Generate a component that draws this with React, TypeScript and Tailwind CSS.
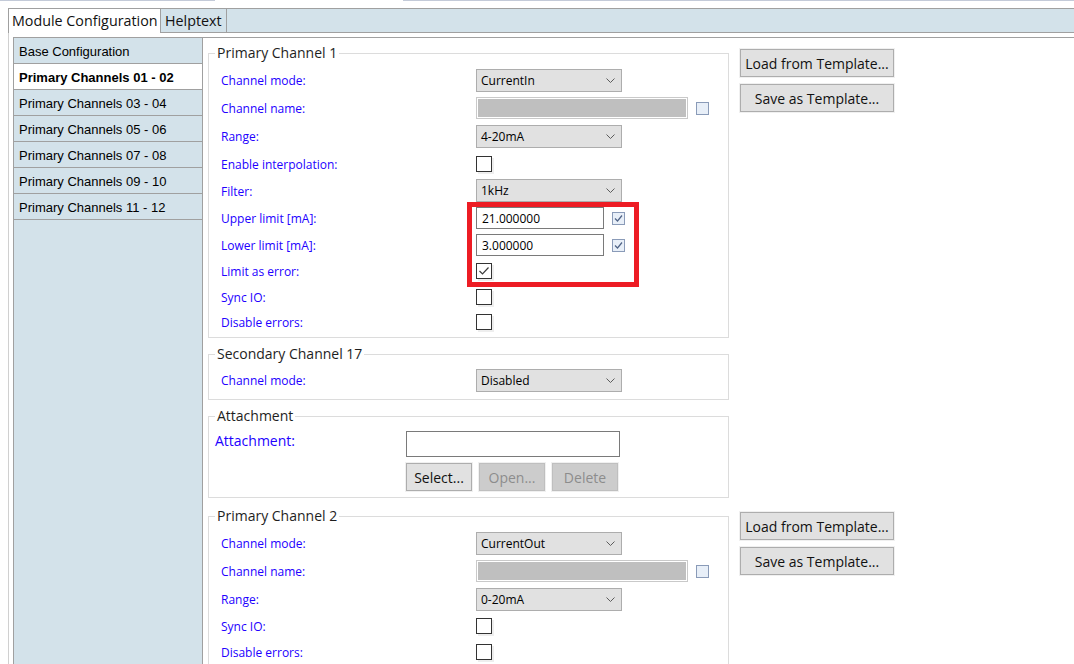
import React from "react";

function Chevron() {
  return (
    <svg width="9" height="5" viewBox="0 0 9 5" className="shrink-0">
      <path d="M0.5 0.5 L4.5 4.5 L8.5 0.5" fill="none" stroke="#5c5c5c" strokeWidth="1" />
    </svg>
  );
}

function Combo({ value }: { value: string }) {
  return (
    <div className="flex h-[23px] w-[146px] items-center justify-between border border-[#adadad] bg-[#e1e1e1] pl-[4px] pr-[6px] text-[12px] text-black">
      <span className="pt-px">{value}</span>
      <Chevron />
    </div>
  );
}

function SmallCheck({ checked }: { checked?: boolean }) {
  return (
    <div className="flex h-[13px] w-[13px] items-center justify-center border border-[#8a9bb8] bg-[#e8eff8]">
      {checked && (
        <svg width="11" height="11" viewBox="0 0 11 11">
          <path d="M2 5.5 L4.5 8 L9 2.5" fill="none" stroke="#4f6386" strokeWidth="1.2" />
        </svg>
      )}
    </div>
  );
}

function BigCheck({ checked }: { checked?: boolean }) {
  return (
    <div className="flex h-[16px] w-[16px] items-center justify-center border border-[#333333] bg-white shadow-[2px_2px_0_#eeeeee]">
      {checked && (
        <svg width="14" height="14" viewBox="0 0 14 14">
          <path d="M2.5 7 L5.5 10 L11.5 3.5" fill="none" stroke="#3c3c3c" strokeWidth="1.2" />
        </svg>
      )}
    </div>
  );
}

function NameBox() {
  return (
    <div className="flex items-center gap-[8px]">
      <div className="h-[22px] w-[212px] border border-[#c9c9c9] bg-white p-px">
        <div className="h-full w-full bg-[#bfbfbf]" />
      </div>
      <SmallCheck />
    </div>
  );
}

function LimitBox({ value }: { value: string }) {
  return (
    <div className="flex items-center gap-[8px]">
      <div className="flex h-[22px] w-[128px] items-center border border-[#7a7a7a] bg-white pl-[5px] pt-px text-[12px] text-black">
        {value}
      </div>
      <SmallCheck checked />
    </div>
  );
}

function Row({ h, label, children }: { h: string; label: string; children: React.ReactNode }) {
  return (
    <div className={`flex items-center ${h}`}>
      <div className="w-[255px] shrink-0 pt-[2px] text-[12px] text-[#2200ff]">{label}</div>
      {children}
    </div>
  );
}

function Button({ label, w, disabled }: { label: string; w: string; disabled?: boolean }) {
  return (
    <div
      className={`flex h-[28px] ${w} items-center justify-center border text-[14px] shadow-[0_0_0_1px_#f0f0f0] ${
        disabled
          ? "border-[#bfbfbf] bg-[#cccccc] text-[#8c8c8c]"
          : "border-[#adadad] bg-[#e1e1e1] text-[#111111]"
      }`}
    >
      {label}
    </div>
  );
}

function TemplateButtons() {
  return (
    <div className="ml-[11px] mt-[5px] flex flex-col gap-[7px]">
      <Button label="Load from Template..." w="w-[154px]" />
      <Button label="Save as Template..." w="w-[154px]" />
    </div>
  );
}

function Group({ title, children }: { title: string; children: React.ReactNode }) {
  return (
    <fieldset className="w-[521px] border border-[#dcdcdc]">
      <legend className="ml-[6px] px-[2px] text-[14px] leading-[18px] text-[#1e1e1e]">{title}</legend>
      {children}
    </fieldset>
  );
}

const sideItems = [
  "Base Configuration",
  "Primary Channels 01 - 02",
  "Primary Channels 03 - 04",
  "Primary Channels 05 - 06",
  "Primary Channels 07 - 08",
  "Primary Channels 09 - 10",
  "Primary Channels 11 - 12",
];

export default function App() {
  return (
    <div className="relative h-[664px] w-[1074px] overflow-hidden bg-white font-['Open_Sans',sans-serif]">
      <div className="flex h-px">
        <div className="w-[215px] bg-[#c3cad8]" />
        <div className="w-[188px]" />
        <div className="flex-1 bg-[#c3cad8]" />
      </div>
      <div className="h-[7px]" />

      <div className="ml-[8px] flex h-[656px] flex-col">
        {/* tab strip */}
        <div className="flex h-[25px] border-t border-[#a0a0a0] bg-[#d3e2ea]">
          <div className="flex h-[24px] w-[153px] items-center border-l border-r border-[#a0a0a0] bg-white pl-[3px] text-[14.3px] text-[#111111]">
            Module Configuration
          </div>
          <div className="flex h-[24px] w-[66px] items-center border-b border-r border-[#a0a0a0] pl-[4px] text-[14.3px] text-[#111111]">
            Helptext
          </div>
          <div className="h-[24px] flex-1 border-b border-[#a0a0a0]" />
        </div>

        {/* tab page */}
        <div className="flex flex-1 flex-col border-l border-[#d0d0d0] pl-[4px] pt-[4px]">
          <div className="flex flex-1 border-l border-t border-[#a0a0a0]">
            {/* sidebar */}
            <div className="w-[189px] shrink-0 border-r border-[#a0a0a0] bg-[#d3e2ea] font-['Liberation_Sans',Arial,sans-serif] text-[13px] text-black">
              {sideItems.map((item, i) => (
                <div
                  key={item}
                  className={`flex h-[26px] items-center border-b border-[#a0a0a0] pl-[5px] pt-[2px] ${
                    i === 1 ? "bg-white font-bold" : ""
                  }`}
                >
                  {item}
                </div>
              ))}
            </div>

            {/* content */}
            <div className="flex flex-1 flex-col pl-[5px] pt-[6px]">
              <div className="flex items-start">
                <Group title="Primary Channel 1">
                  <div className="pb-[3px] pl-[12px] pt-[4px]">
                    <Row h="h-[28px]" label="Channel mode:">
                      <Combo value="CurrentIn" />
                    </Row>
                    <Row h="h-[28px]" label="Channel name:">
                      <NameBox />
                    </Row>
                    <Row h="h-[28px]" label="Range:">
                      <Combo value="4-20mA" />
                    </Row>
                    <Row h="h-[27px]" label="Enable interpolation:">
                      <BigCheck />
                    </Row>
                    <Row h="h-[27px]" label="Filter:">
                      <Combo value="1kHz" />
                    </Row>
                    <Row h="h-[28px]" label="Upper limit [mA]:">
                      <LimitBox value="21.000000" />
                    </Row>
                    <Row h="h-[26px]" label="Lower limit [mA]:">
                      <LimitBox value="3.000000" />
                    </Row>
                    <Row h="h-[26px]" label="Limit as error:">
                      <BigCheck checked />
                    </Row>
                    <Row h="h-[25px]" label="Sync IO:">
                      <BigCheck />
                    </Row>
                    <Row h="h-[25px]" label="Disable errors:">
                      <BigCheck />
                    </Row>
                  </div>
                </Group>
                <TemplateButtons />
              </div>

              <div className="mt-[7px]">
                <Group title="Secondary Channel 17">
                  <div className="pb-[5px] pl-[12px] pt-[3px]">
                    <Row h="h-[28px]" label="Channel mode:">
                      <Combo value="Disabled" />
                    </Row>
                  </div>
                </Group>
              </div>

              <div className="mt-[7px]">
                <Group title="Attachment">
                  <div className="pb-[6px] pl-[6px] pt-[6px]">
                    <div className="flex h-[26px] items-start">
                      <div className="w-[191px] shrink-0 text-[14px] leading-[20px] text-[#2200ff]">Attachment:</div>
                      <div className="h-[26px] w-[214px] border border-[#7a7a7a] bg-white" />
                    </div>
                    <div className="ml-[191px] mt-[6px] flex gap-[7px]">
                      <Button label="Select..." w="w-[66px]" />
                      <Button label="Open..." w="w-[66px]" disabled />
                      <Button label="Delete" w="w-[66px]" disabled />
                    </div>
                  </div>
                </Group>
              </div>

              <div className="mt-[9px] flex items-start">
                <Group title="Primary Channel 2">
                  <div className="pl-[12px] pt-[4px]">
                    <Row h="h-[28px]" label="Channel mode:">
                      <Combo value="CurrentOut" />
                    </Row>
                    <Row h="h-[28px]" label="Channel name:">
                      <NameBox />
                    </Row>
                    <Row h="h-[28px]" label="Range:">
                      <Combo value="0-20mA" />
                    </Row>
                    <Row h="h-[26px]" label="Sync IO:">
                      <BigCheck />
                    </Row>
                    <Row h="h-[25px]" label="Disable errors:">
                      <BigCheck />
                    </Row>
                    <div className="h-[20px]" />
                  </div>
                </Group>
                <TemplateButtons />
              </div>
            </div>
          </div>
        </div>
      </div>

      {/* annotation */}
      <div className="absolute left-[467px] top-[202px] h-[85px] w-[172px] border-[5px] border-[#ed1c24]" />
    </div>
  );
}
